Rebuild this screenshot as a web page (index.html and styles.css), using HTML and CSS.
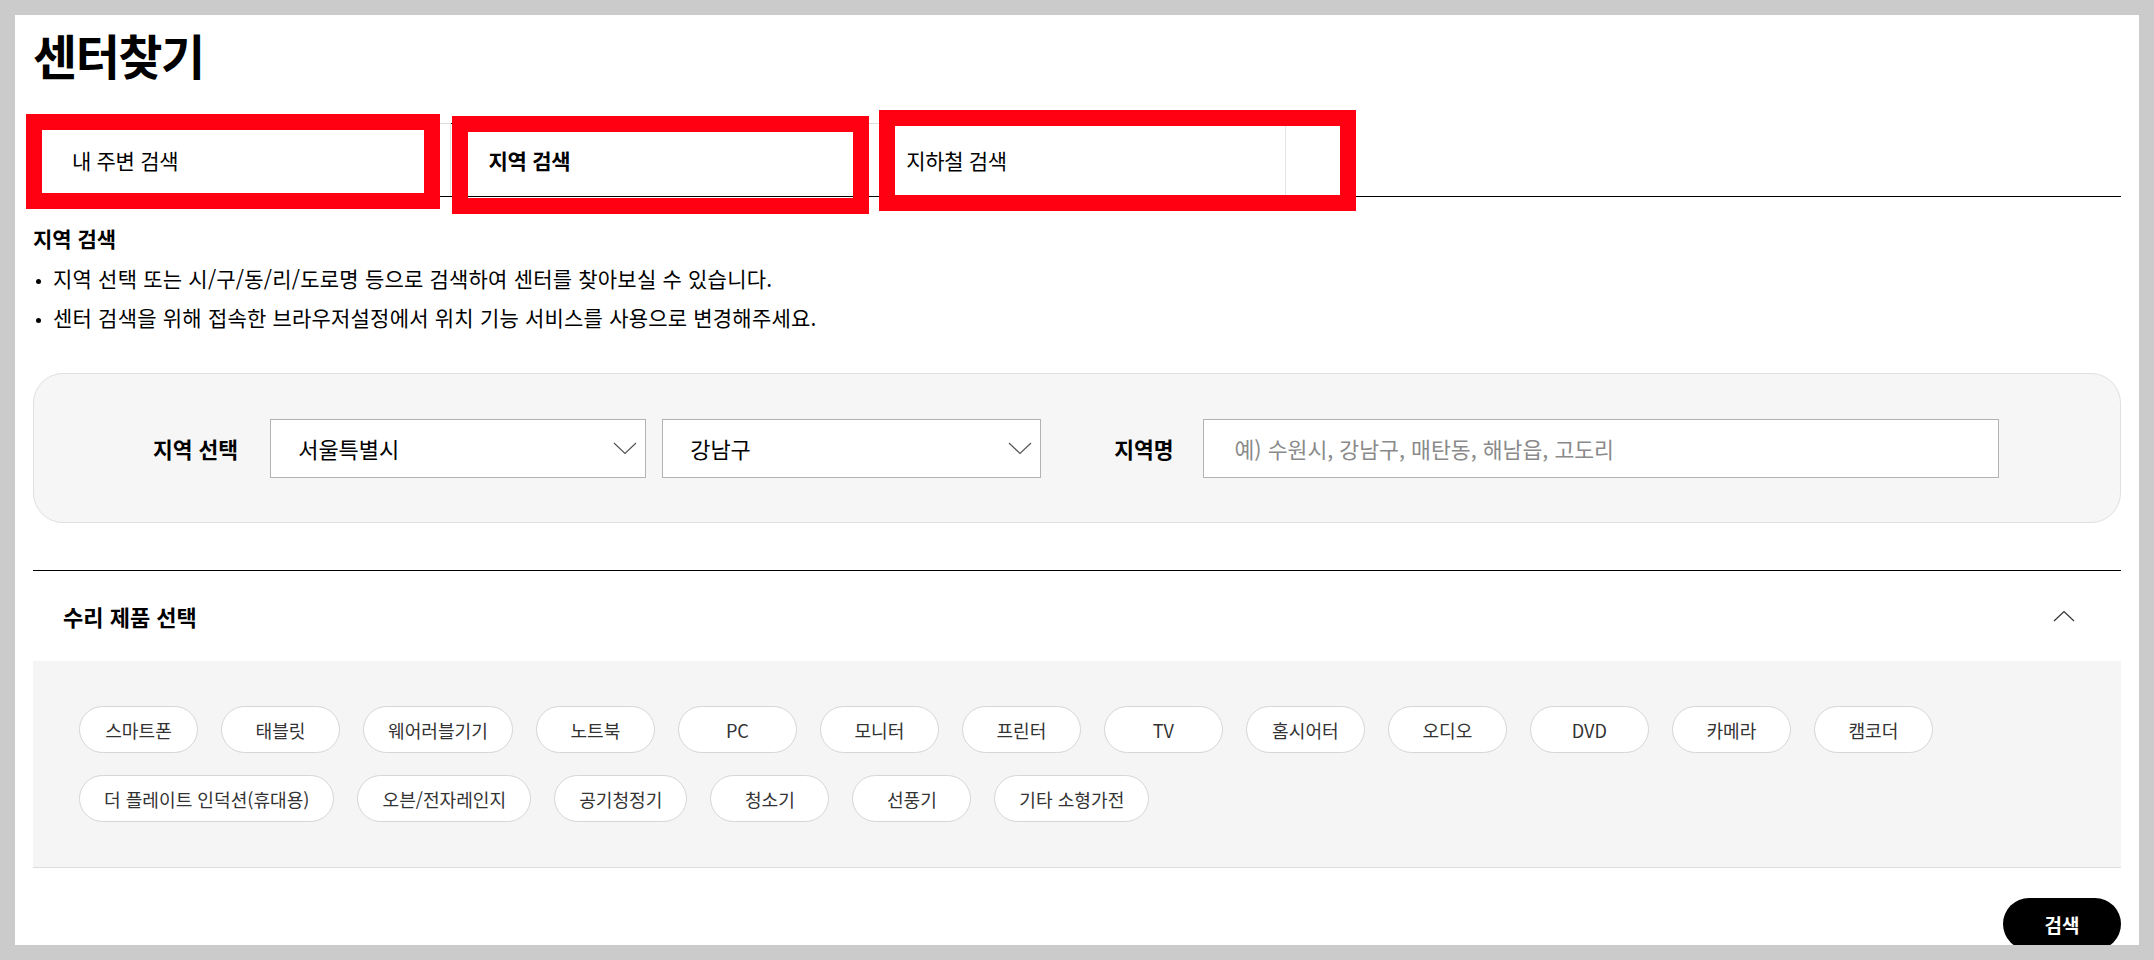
FILE: index.html
```html
<!DOCTYPE html>
<html lang="ko">

<head>
    <meta charset="UTF-8">
    <meta name="viewport" content="width=device-width, initial-scale=1.0">
    <title>센터찾기</title>
    <link rel="stylesheet" href="styles.css">
</head>

<body>
    <div class="page">
        <h1 class="title">센터찾기</h1>

        <ul class="tabs">
            <li class="tab">내 주변 검색</li>
            <li class="tab active">지역 검색</li>
            <li class="tab">지하철 검색</li>
        </ul>

        <h2 class="sub-title">지역 검색</h2>
        <ul class="notice">
            <li>지역 선택 또는 시/구/동/리/도로명 등으로 검색하여 센터를 찾아보실 수 있습니다.</li>
            <li>센터 검색을 위해 접속한 브라우저설정에서 위치 기능 서비스를 사용으로 변경해주세요.</li>
        </ul>

        <div class="search-box">
            <span class="label">지역 선택</span>
            <div class="select city">
                <span>서울특별시</span>
                <svg width="24" height="13" viewBox="0 0 24 13"><polyline points="1,1 12,11.5 23,1" fill="none" stroke="#555" stroke-width="1.2"/></svg>
            </div>
            <div class="select gu">
                <span>강남구</span>
                <svg width="24" height="13" viewBox="0 0 24 13"><polyline points="1,1 12,11.5 23,1" fill="none" stroke="#555" stroke-width="1.2"/></svg>
            </div>
            <span class="label label-name">지역명</span>
            <input type="text" class="keyword" placeholder="예) 수원시, 강남구, 매탄동, 해남읍, 고도리">
        </div>

        <div class="product">
            <div class="product-head">
                <span>수리 제품 선택</span>
                <svg width="22" height="12" viewBox="0 0 22 12"><polyline points="1,11 11,1.5 21,11" fill="none" stroke="#333" stroke-width="1.2"/></svg>
            </div>
            <div class="chips">
                <button class="chip">스마트폰</button>
                <button class="chip">태블릿</button>
                <button class="chip">웨어러블기기</button>
                <button class="chip">노트북</button>
                <button class="chip">PC</button>
                <button class="chip">모니터</button>
                <button class="chip">프린터</button>
                <button class="chip">TV</button>
                <button class="chip">홈시어터</button>
                <button class="chip">오디오</button>
                <button class="chip">DVD</button>
                <button class="chip">카메라</button>
                <button class="chip">캠코더</button>
                <button class="chip">더 플레이트 인덕션(휴대용)</button>
                <button class="chip">오븐/전자레인지</button>
                <button class="chip">공기청정기</button>
                <button class="chip">청소기</button>
                <button class="chip">선풍기</button>
                <button class="chip">기타 소형가전</button>
            </div>
        </div>

        <div class="actions">
            <button class="btn-search">검색</button>
        </div>

        <!-- red review marks drawn over the tabs -->
        <span class="mark mark-1"></span>
        <span class="mark mark-2"></span>
        <span class="mark mark-3"></span>
    </div>
</body>

</html>
```

FILE: styles.css
```css
* {
    box-sizing: border-box;
    padding: 0;
    margin: 0;
}

body {
    background-color: #cbcbcb;
    padding: 15px 15px 0;
    font-family: "Noto Sans CJK KR", "Noto Sans", sans-serif;
    color: #000;
}

.page {
    position: relative;
    height: 930px;
    overflow: hidden;
    background-color: #fff;
    padding: 0 18px;
}

.title {
    font-size: 48px;
    font-weight: 700;
    line-height: 60px;
    letter-spacing: -1.5px;
    padding-top: 9px;
}

.tabs {
    display: flex;
    list-style: none;
    margin-top: 39px;
    border-bottom: 1px solid #000;
}

.tab {
    width: 20%;
    height: 73px;
    display: flex;
    align-items: center;
    padding-left: 38px;
    border-top: 1px solid #ddd;
    border-right: 1px solid #e4e4e4;
    font-size: 21px;
    letter-spacing: -0.3px;
}

.tab:first-child {
    border-left: 1px solid #ddd;
}

.tab.active {
    font-weight: 700;
    border-top-color: #000;
    border-right-color: #000;
}

.sub-title {
    margin-top: 26px;
    font-size: 21px;
    line-height: 30px;
}

.notice {
    list-style: none;
    margin-top: 6px;
    font-size: 21px;
    line-height: 39px;
    letter-spacing: 0.2px;
}

.notice li::before {
    content: "";
    display: inline-block;
    width: 5px;
    height: 5px;
    border-radius: 50%;
    background-color: #000;
    margin: 0 12px 0 3px;
    vertical-align: middle;
}

.search-box {
    display: flex;
    align-items: center;
    height: 150px;
    margin-top: 36px;
    padding: 0 121px 0 119px;
    border: 1px solid #e0e0e0;
    border-radius: 30px;
    background-color: #f6f6f6;
}

.label {
    font-size: 21.5px;
    font-weight: 700;
    white-space: nowrap;
    margin-right: 32px;
}

.label-name {
    margin-left: 73px;
    margin-right: 30px;
}

.select {
    display: flex;
    align-items: center;
    justify-content: space-between;
    width: 376px;
    height: 59px;
    padding: 0 8px 0 27px;
    border: 1px solid #b3b3b3;
    background-color: #fff;
    font-size: 22px;
}

.select.gu {
    width: 379px;
    margin-left: 16px;
}

.keyword {
    flex: 1;
    height: 59px;
    padding: 0 30px;
    border: 1px solid #b3b3b3;
    font-family: inherit;
    font-size: 21.6px;
    color: #000;
    outline: none;
}

.keyword::placeholder {
    color: #8a8a8a;
}

.product {
    margin-top: 47px;
    border-top: 1px solid #000;
}

.product-head {
    display: flex;
    align-items: center;
    justify-content: space-between;
    height: 90px;
    padding: 0 46px 0 30px;
    font-size: 22px;
    font-weight: 700;
}

.chips {
    display: flex;
    flex-wrap: wrap;
    gap: 22px 23px;
    padding: 45px 46px;
    background-color: #f5f5f5;
    border-bottom: 1px solid #ddd;
}

.chip {
    min-width: 119px;
    height: 47px;
    padding: 0 24px;
    border: 1px solid #d6d6d6;
    border-radius: 24px;
    background-color: #fff;
    font-family: inherit;
    font-size: 18.1px;
    color: #333;
    cursor: pointer;
}

.actions {
    display: flex;
    justify-content: flex-end;
    margin-top: 30px;
}

.btn-search {
    width: 118px;
    height: 52px;
    border: 0;
    border-radius: 26px;
    background-color: #000;
    color: #fff;
    font-family: inherit;
    font-size: 19px;
    font-weight: 700;
    cursor: pointer;
}

.mark {
    position: absolute;
    border: 16px solid #fe0012;
}

.mark-1 {
    left: 11px;
    top: 99px;
    width: 414px;
    height: 95px;
}

.mark-2 {
    left: 437px;
    top: 101px;
    width: 417px;
    height: 98px;
}

.mark-3 {
    left: 864px;
    top: 95px;
    width: 477px;
    height: 101px;
}
```
